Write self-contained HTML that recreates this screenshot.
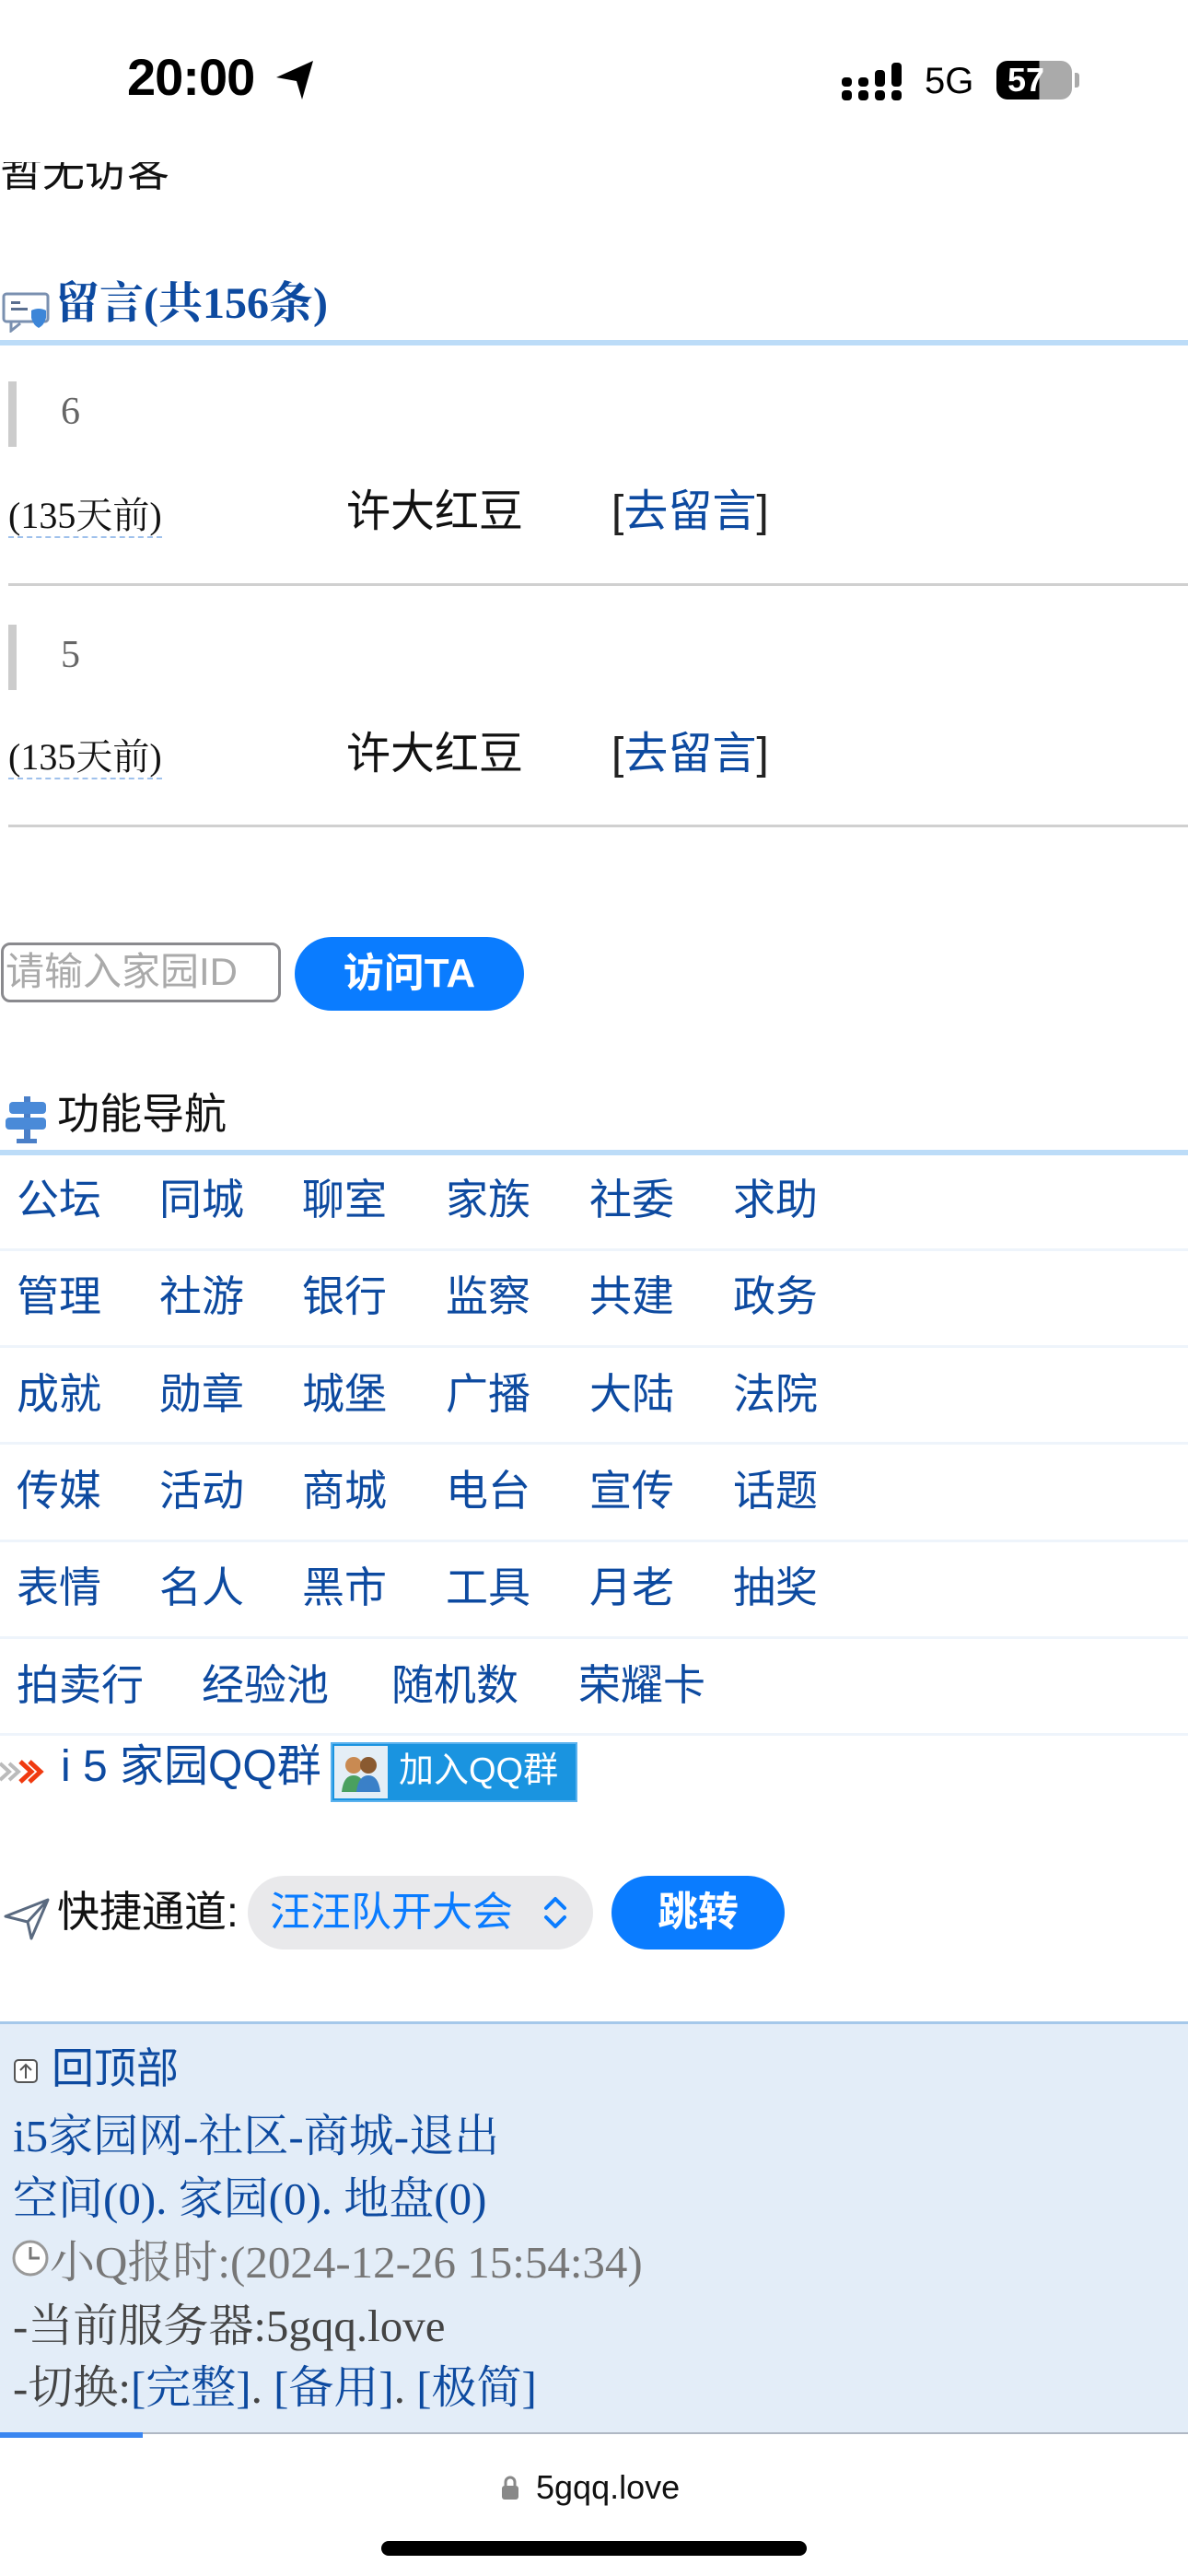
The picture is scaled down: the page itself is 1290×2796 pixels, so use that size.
<!DOCTYPE html>
<html><head><meta charset="utf-8"><style>
*{margin:0;padding:0;box-sizing:border-box}
body{width:1290px;height:2796px;background:#fff;position:relative;overflow:hidden;font-family:"Liberation Sans","Noto Sans CJK SC",sans-serif}
.a{position:absolute;white-space:nowrap}
.serif{font-family:"Liberation Serif","Noto Serif CJK SC","Noto Sans CJK SC",serif}
.blue{color:#0d4aa0}
.nav{font-size:46px;color:#0d4aa0;line-height:1}
.sep{position:absolute;left:0;width:1290px;height:3px;background:#eef4fb}
.ft{font-size:46px;line-height:1;color:#0d4aa0}
</style></head><body>
<div class="a" style="left:0;top:163px;font-size:46px;color:#111;line-height:1">暂无访客</div>
<div class="a" style="left:0;top:0;width:1290px;height:176px;background:#fff"></div>
<!-- status bar -->
<div class="a" style="left:138px;top:56px;font-size:56px;font-weight:bold;color:#000;line-height:1;letter-spacing:-1px">20:00</div>
<svg class="a" style="left:298px;top:64px" width="44" height="46" viewBox="0 0 44 46"><path d="M2 20 L42 2 L30 44 L24 24 Z" fill="#000"/></svg>
<svg class="a" style="left:914px;top:68px" width="68" height="42" viewBox="0 0 68 42"><g fill="#000"><rect x="0" y="16" width="11" height="10" rx="4"/><rect x="0" y="30" width="11" height="11" rx="4"/><rect x="18" y="16" width="11" height="10" rx="4"/><rect x="18" y="30" width="11" height="11" rx="4"/><rect x="36" y="8" width="11" height="18" rx="4"/><rect x="36" y="30" width="11" height="11" rx="4"/><rect x="54" y="0" width="11" height="26" rx="4"/><rect x="54" y="30" width="11" height="11" rx="4"/></g></svg>
<div class="a" style="left:1004px;top:68px;font-size:40px;color:#000;line-height:1">5G</div>
<div class="a" style="left:1082px;top:66px;width:82px;height:42px;border-radius:12px;background:linear-gradient(90deg,#000 0,#000 57%,#aaa 57%);color:#fff;font-weight:bold;font-size:36px;line-height:42px;padding-left:12px">57</div>
<div class="a" style="left:1167px;top:79px;width:5px;height:16px;border-radius:0 3px 3px 0;background:#aaa"></div>
<!-- heading -->
<svg class="a" style="left:2px;top:315px" width="56" height="46" viewBox="0 0 56 46"><rect x="2" y="4" width="48" height="30" rx="3" fill="none" stroke="#7a90b0" stroke-width="3"/><path d="M10 34 L10 44 L20 36" fill="none" stroke="#7a90b0" stroke-width="3"/><rect x="10" y="12" width="10" height="3" fill="#5a6f90"/><rect x="10" y="19" width="18" height="3" fill="#5a6f90"/><path d="M32 22 Q40 18 48 22 L48 30 Q46 38 40 41 Q34 38 32 30 Z" fill="#3d86d8"/></svg>
<div class="a serif" style="left:60px;top:304px;font-size:48px;font-weight:bold;color:#0d4aa0;line-height:1.1">留言(共156条)</div>
<div class="a" style="left:0;top:369px;width:1290px;height:6px;background:#bcdcf8"></div>
<!-- item 1 -->
<div class="a" style="left:9px;top:414px;width:9px;height:71px;background:#ccc"></div>
<div class="a serif" style="left:66px;top:426px;font-size:42px;color:#666;line-height:1">6</div>
<div class="a serif" style="left:9px;top:540px;font-size:40px;color:#111;line-height:1;border-bottom:2px dashed #9fc1ec;padding-bottom:2px">(135天前)</div>
<div class="a" style="left:376px;top:532px;font-size:48px;color:#111;line-height:1">许大红豆</div>
<div class="a" style="left:664px;top:532px;font-size:48px;color:#222;line-height:1">[<span class="blue">去留言</span>]</div>
<div class="a" style="left:9px;top:633px;width:1281px;height:3px;background:#d0d0d0"></div>
<!-- item 2 -->
<div class="a" style="left:9px;top:678px;width:9px;height:71px;background:#ccc"></div>
<div class="a serif" style="left:66px;top:690px;font-size:42px;color:#666;line-height:1">5</div>
<div class="a serif" style="left:9px;top:802px;font-size:40px;color:#111;line-height:1;border-bottom:2px dashed #9fc1ec;padding-bottom:2px">(135天前)</div>
<div class="a" style="left:376px;top:795px;font-size:48px;color:#111;line-height:1">许大红豆</div>
<div class="a" style="left:664px;top:795px;font-size:48px;color:#222;line-height:1">[<span class="blue">去留言</span>]</div>
<div class="a" style="left:9px;top:895px;width:1281px;height:3px;background:#d0d0d0"></div>
<!-- input -->
<div class="a" style="left:1px;top:1023px;width:304px;height:65px;border:3px solid #8a8a8e;border-radius:10px;font-size:42px;color:#aaa;line-height:58px;padding-left:2px">请输入家园ID</div>
<div class="a" style="left:320px;top:1017px;width:249px;height:80px;border-radius:40px;background:#0a7cff;color:#fff;font-weight:bold;font-size:44px;line-height:80px;text-align:center">访问TA</div>
<!-- nav title -->
<svg class="a" style="left:4px;top:1188px" width="52" height="56" viewBox="0 0 52 56"><rect x="22" y="2" width="7" height="50" fill="#4a7fc8"/><rect x="6" y="8" width="40" height="13" rx="4" fill="#4a8ad8"/><rect x="2" y="25" width="44" height="13" rx="4" fill="#4a8ad8"/><rect x="14" y="48" width="22" height="5" fill="#4a7fc8"/></svg>
<div class="a" style="left:62px;top:1186px;font-size:46px;color:#111;line-height:1">功能导航</div>
<div class="a" style="left:0;top:1248px;width:1290px;height:6px;background:#bcdcf8"></div>
<!-- nav grid -->
<div class="a nav" style="left:18px;top:1279px">公坛</div><div class="a nav" style="left:173px;top:1279px">同城</div><div class="a nav" style="left:328px;top:1279px">聊室</div><div class="a nav" style="left:484px;top:1279px">家族</div><div class="a nav" style="left:640px;top:1279px">社委</div><div class="a nav" style="left:796px;top:1279px">求助</div>
<div class="sep" style="top:1355px"></div>
<div class="a nav" style="left:18px;top:1384px">管理</div><div class="a nav" style="left:173px;top:1384px">社游</div><div class="a nav" style="left:328px;top:1384px">银行</div><div class="a nav" style="left:484px;top:1384px">监察</div><div class="a nav" style="left:640px;top:1384px">共建</div><div class="a nav" style="left:796px;top:1384px">政务</div>
<div class="sep" style="top:1460px"></div>
<div class="a nav" style="left:18px;top:1490px">成就</div><div class="a nav" style="left:173px;top:1490px">勋章</div><div class="a nav" style="left:328px;top:1490px">城堡</div><div class="a nav" style="left:484px;top:1490px">广播</div><div class="a nav" style="left:640px;top:1490px">大陆</div><div class="a nav" style="left:796px;top:1490px">法院</div>
<div class="sep" style="top:1565px"></div>
<div class="a nav" style="left:18px;top:1595px">传媒</div><div class="a nav" style="left:173px;top:1595px">活动</div><div class="a nav" style="left:328px;top:1595px">商城</div><div class="a nav" style="left:484px;top:1595px">电台</div><div class="a nav" style="left:640px;top:1595px">宣传</div><div class="a nav" style="left:796px;top:1595px">话题</div>
<div class="sep" style="top:1671px"></div>
<div class="a nav" style="left:18px;top:1700px">表情</div><div class="a nav" style="left:173px;top:1700px">名人</div><div class="a nav" style="left:328px;top:1700px">黑市</div><div class="a nav" style="left:484px;top:1700px">工具</div><div class="a nav" style="left:640px;top:1700px">月老</div><div class="a nav" style="left:796px;top:1700px">抽奖</div>
<div class="sep" style="top:1776px"></div>
<div class="a nav" style="left:18px;top:1806px">拍卖行</div><div class="a nav" style="left:219px;top:1806px">经验池</div><div class="a nav" style="left:425px;top:1806px">随机数</div><div class="a nav" style="left:628px;top:1806px">荣耀卡</div>
<div class="sep" style="top:1881px"></div>
<!-- QQ -->
<svg class="a" style="left:0;top:1910px" width="50" height="26" viewBox="0 0 50 26"><path d="M0 4 L10 13 L0 22 M10 4 L20 13 L10 22" fill="none" stroke="#bbb" stroke-width="4"/><path d="M22 2 L34 13 L22 24 M32 2 L44 13 L32 24" fill="none" stroke="#f03a10" stroke-width="5"/></svg>
<div class="a" style="left:66px;top:1894px;font-size:48px;color:#0d4aa0;line-height:1">i 5 家园QQ群</div>
<div class="a" style="left:359px;top:1891px;width:268px;height:65px;background:#1a94e0;border:2px solid #5bb2ee">
<div class="a" style="left:2px;top:2px;width:58px;height:57px;background:#e4eef6"></div>
<svg class="a" style="left:6px;top:6px" width="50" height="50" viewBox="0 0 50 50"><circle cx="17" cy="17" r="9" fill="#c98a52"/><circle cx="33" cy="17" r="9" fill="#8a5a30"/><path d="M4 46 Q6 28 17 28 Q28 28 30 46Z" fill="#4aa060"/><path d="M20 46 Q22 28 33 28 Q44 28 46 46Z" fill="#3a80c8"/></svg>
<div class="a" style="left:72px;top:10px;font-size:38px;color:#fff;line-height:1">加入QQ群</div></div>
<!-- quick -->
<svg class="a" style="left:4px;top:2058px" width="52" height="48" viewBox="0 0 52 48"><path d="M2 22 L48 4 L30 46 L26 28 Z M26 28 L48 4" fill="none" stroke="#5a6a80" stroke-width="3" stroke-linejoin="round"/></svg>
<div class="a" style="left:62px;top:2052px;font-size:46px;color:#111;line-height:1">快捷通道:</div>
<div class="a" style="left:269px;top:2036px;width:375px;height:80px;border-radius:40px;background:#e9e9eb;font-size:44px;color:#0a7cff;line-height:80px;padding-left:24px">汪汪队开大会</div>
<svg class="a" style="left:588px;top:2056px" width="30" height="40" viewBox="0 0 30 40"><path d="M5 15 L15 5 L25 15 M5 25 L15 35 L25 25" fill="none" stroke="#0a7cff" stroke-width="4" stroke-linecap="round" stroke-linejoin="round"/></svg>
<div class="a" style="left:664px;top:2036px;width:188px;height:80px;border-radius:40px;background:#0a7cff;color:#fff;font-weight:bold;font-size:44px;line-height:80px;text-align:center">跳转</div>
<!-- footer -->
<div class="a" style="left:0;top:2194px;width:1290px;height:448px;background:#e3edf8;border-top:3px solid #a5c8ea;border-bottom:2px solid #b0b8c4"></div>
<svg class="a" style="left:14px;top:2234px" width="28" height="28" viewBox="0 0 28 28"><rect x="2" y="2" width="24" height="24" rx="4" fill="#fff" stroke="#555" stroke-width="2"/><path d="M14 22 V8 M8 13 L14 7 L20 13" fill="none" stroke="#555" stroke-width="2"/></svg>
<div class="a ft" style="left:56px;top:2222px">回顶部</div>
<div class="a ft serif" style="left:14px;top:2294px;font-size:49px">i5家园网-社区-商城-退出</div>
<div class="a ft serif" style="left:14px;top:2362px;font-size:49px">空间(0). 家园(0). 地盘(0)</div>
<svg class="a" style="left:12px;top:2430px" width="42" height="42" viewBox="0 0 42 42"><circle cx="21" cy="21" r="18" fill="#fff" stroke="#999" stroke-width="3"/><path d="M21 9 V21 H31" fill="none" stroke="#777" stroke-width="3"/></svg>
<div class="a ft serif" style="left:54px;top:2431px;color:#777;font-size:49px">小Q报时:(2024-12-26 15:54:34)</div>
<div class="a ft serif" style="left:14px;top:2500px;color:#444;font-size:49px">-当前服务器:5gqq.love</div>
<div class="a ft serif" style="left:14px;top:2567px;color:#444;font-size:49px">-切换:<span class="blue">[完整]</span>. <span class="blue">[备用]</span>. <span class="blue">[极简]</span></div>
<div class="a" style="left:0;top:2640px;width:155px;height:6px;background:#3a86f0"></div>
<!-- url bar -->
<svg class="a" style="left:544px;top:2686px" width="20" height="28" viewBox="0 0 20 28"><path d="M5 12 V8 a5 5 0 0 1 10 0 V12" fill="none" stroke="#888" stroke-width="3"/><rect x="1" y="12" width="18" height="15" rx="3" fill="#888"/></svg>
<div class="a" style="left:582px;top:2682px;font-size:36px;color:#111;line-height:1">5gqq.love</div>
<div class="a" style="left:414px;top:2758px;width:462px;height:16px;border-radius:8px;background:#000"></div>
</body></html>
